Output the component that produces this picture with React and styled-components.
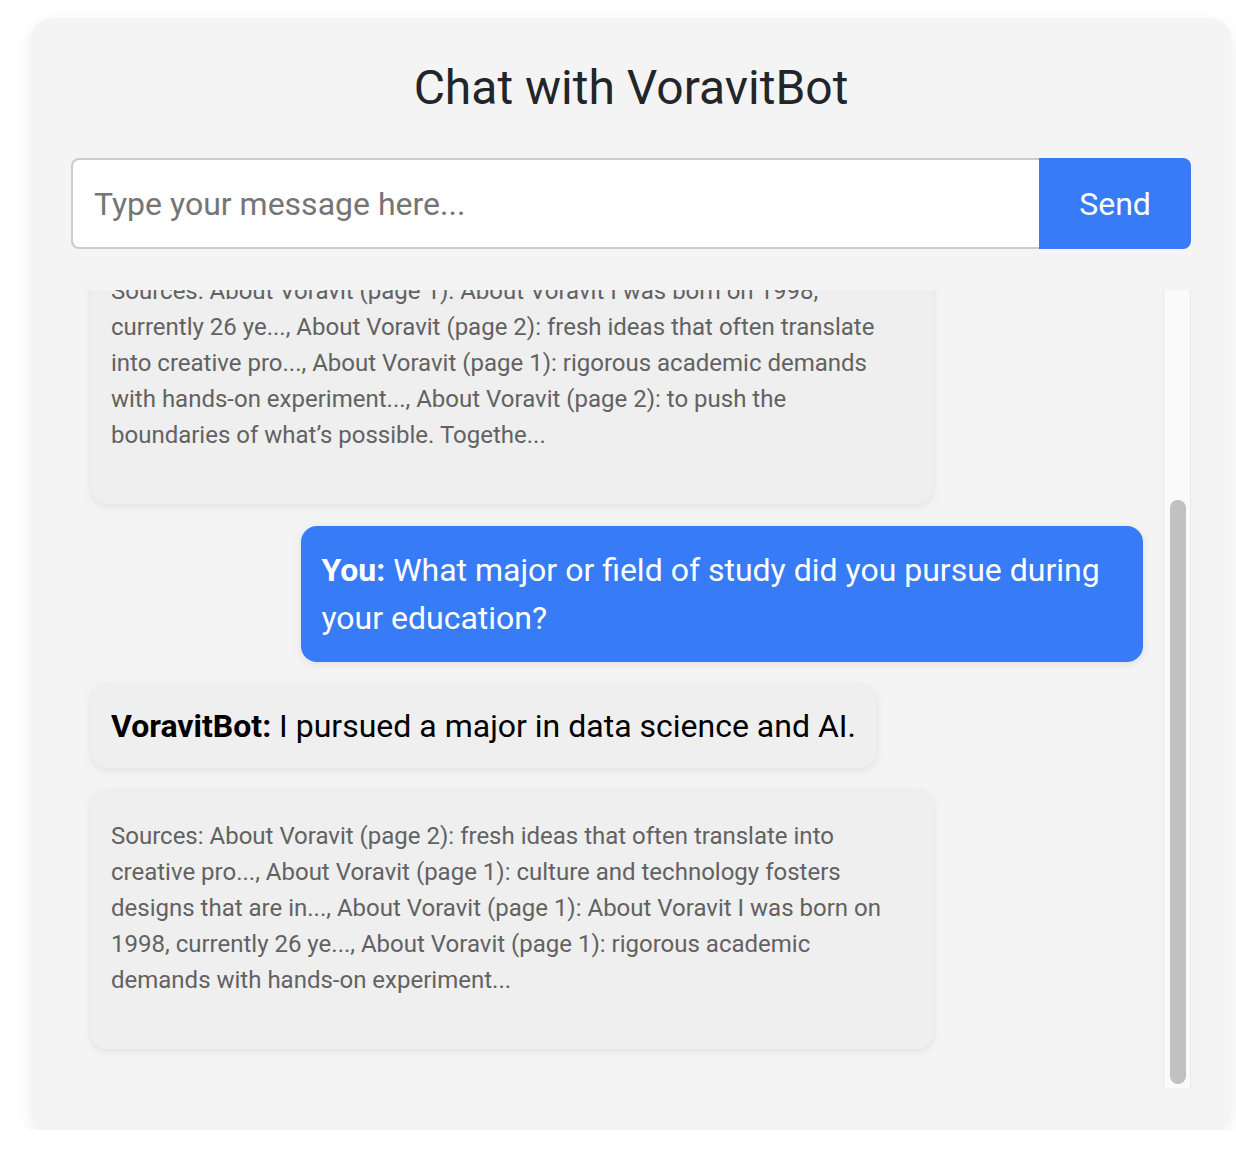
import React, { useLayoutEffect, useRef, useState } from "react";
import styled, { createGlobalStyle } from "styled-components";

const GlobalStyle = createGlobalStyle`
  html, body {
    margin: 0;
    padding: 0;
    background: #ffffff;
    font-family: Roboto, "Liberation Sans", sans-serif;
  }
  * { box-sizing: border-box; }
`;

const Page = styled.div`
  padding: 18px 0 0 31px;
`;

const Card = styled.div`
  width: 1200px;
  background: #f4f4f4;
  border-radius: 22px;
  box-shadow: 0 6px 18px rgba(0, 0, 0, 0.08);
  padding: 40px 40px 42px;
  display: flex;
  flex-direction: column;
`;

const Title = styled.h1`
  margin: 0;
  text-align: center;
  font-size: 48px;
  font-weight: 400;
  line-height: 60px;
  color: #222529;
`;

const InputRow = styled.div`
  display: flex;
  margin-top: 40px;
  height: 91px;
`;

const MessageInput = styled.input`
  flex: 1;
  border: 2px solid #cccccc;
  border-right: none;
  border-radius: 8px 0 0 8px;
  background: #ffffff;
  padding: 0 21px;
  font-family: Roboto, "Liberation Sans", sans-serif;
  font-size: 32px;
  color: #222;
  outline: none;

  &::placeholder {
    color: #757575;
  }
`;

const SendButton = styled.button`
  width: 152px;
  border: none;
  border-radius: 0 8px 8px 0;
  background: #377bf6;
  color: #ffffff;
  font-family: Roboto, "Liberation Sans", sans-serif;
  font-size: 32px;
  cursor: pointer;
`;

const ChatArea = styled.div`
  margin-top: 41px;
  height: 798px;
  display: flex;
`;

const Viewport = styled.div`
  flex: 1;
  min-width: 0;
  overflow: hidden;
  display: flex;
  flex-direction: column;
  gap: 22px;
  padding: 20px 20px 39px;
`;

const ScrollTrack = styled.div`
  width: 28px;
  background: #fafafa;
  border-left: 1px solid #e8e8e8;
  border-right: 1px solid #e8e8e8;
  padding: 4px 3px 4px 6px;
  display: flex;
  flex-direction: column;
`;

const ScrollThumb = styled.div`
  width: 16px;
  border-radius: 8px;
  background: #c1c1c1;
`;

const Bubble = styled.div`
  max-width: 80%;
  border-radius: 16px;
  box-shadow: 0 2px 9px rgba(0, 0, 0, 0.09);
  font-size: 32px;
  line-height: 48px;
  padding: ${(p) => (p.$user ? "20px 20px" : "18px 20px")};
  align-self: ${(p) => (p.$user ? "flex-end" : "flex-start")};
  background: ${(p) => (p.$user ? "#377bf6" : "#efefef")};
  color: ${(p) => (p.$user ? "#ffffff" : "#000000")};
  flex-shrink: 0;
`;

const SourcesBubble = styled.div`
  width: 80%;
  align-self: flex-start;
  flex-shrink: 0;
  border-radius: 16px;
  box-shadow: 0 2px 9px rgba(0, 0, 0, 0.09);
  background: #efefef;
  color: #626262;
  font-size: 24px;
  line-height: 36px;
  padding: 28px 40px 51px 20px;
`;

const Sender = styled.strong`
  font-weight: 700;
`;

const history = [
  { type: "user", text: "Tell me about yourself." },
  { type: "bot", text: "I was born in 1998, currently 26 years old." },
  {
    type: "sources",
    text:
      "Sources: About Voravit (page 1): About Voravit I was born on 1998, currently 26 ye..., About Voravit (page 2): fresh ideas that often translate into creative pro..., About Voravit (page 1): rigorous academic demands with hands-on experiment..., About Voravit (page 2): to push the boundaries of what\u2019s possible. Togethe...",
  },
  {
    type: "user",
    text: "What major or field of study did you pursue during your education?",
  },
  { type: "bot", text: "I pursued a major in data science and AI." },
  {
    type: "sources",
    text:
      "Sources: About Voravit (page 2): fresh ideas that often translate into creative pro..., About Voravit (page 1): culture and technology fosters designs that are in..., About Voravit (page 1): About Voravit I was born on 1998, currently 26 ye..., About Voravit (page 1): rigorous academic demands with hands-on experiment...",
  },
];

export default function App() {
  const listRef = useRef(null);
  const [thumb, setThumb] = useState({ top: 0, height: 0 });

  useLayoutEffect(() => {
    const el = listRef.current;
    if (!el) return;
    el.scrollTop = el.scrollHeight;
    const trackLen = el.clientHeight - 8;
    const height = Math.max(40, (trackLen * el.clientHeight) / el.scrollHeight);
    const maxScroll = el.scrollHeight - el.clientHeight;
    const top = maxScroll > 0 ? ((trackLen - height) * el.scrollTop) / maxScroll : 0;
    setThumb({ top, height });
  }, []);

  return (
    <>
      <GlobalStyle />
      <Page>
        <Card>
          <Title>Chat with VoravitBot</Title>
          <InputRow>
            <MessageInput placeholder="Type your message here..." />
            <SendButton>Send</SendButton>
          </InputRow>
          <ChatArea>
            <Viewport ref={listRef}>
              {history.map((m, i) =>
                m.type === "sources" ? (
                  <SourcesBubble key={i}>{m.text}</SourcesBubble>
                ) : (
                  <Bubble key={i} $user={m.type === "user"}>
                    <Sender>{m.type === "user" ? "You:" : "VoravitBot:"}</Sender>{" "}
                    {m.text}
                  </Bubble>
                )
              )}
            </Viewport>
            <ScrollTrack>
              <ScrollThumb style={{ marginTop: thumb.top, height: thumb.height }} />
            </ScrollTrack>
          </ChatArea>
        </Card>
      </Page>
    </>
  );
}
